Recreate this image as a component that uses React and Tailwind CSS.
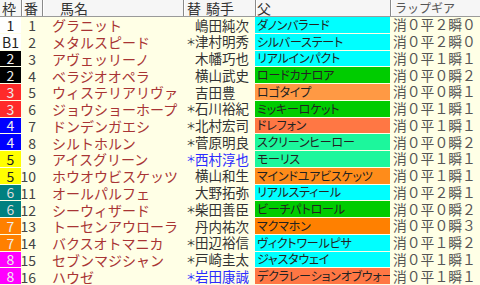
import React from 'react';

const waku = {
	1: { bg: 'bg-white', fg: 'text-[#222]' },
	2: { bg: 'bg-black', fg: 'text-[#eee]' },
	3: { bg: 'bg-[#ff2a2a]', fg: 'text-[#eee]' },
	4: { bg: 'bg-[#0000ff]', fg: 'text-[#eee]' },
	5: { bg: 'bg-[#ffff00]', fg: 'text-[#222]' },
	6: { bg: 'bg-[#008080]', fg: 'text-[#ddd]' },
	7: { bg: 'bg-[#ff8000]', fg: 'text-[#eee]' },
	8: { bg: 'bg-[#ff00ff]', fg: 'text-[#eee]' },
};

const sire = {
	cyan: 'bg-[#00ffff]',
	green: 'bg-[#00cc00]',
	orange: 'bg-[#ff9944]',
	coral: 'bg-[#ff7744]',
	mint: 'bg-[#1cf79c]',
	amber: 'bg-[#ff8c1a]',
	deep: 'bg-[#ff8000]',
};

const horses = [
	{ w: 1, label: '1', no: 1, name: 'グラニット', mark: false, jockey: '嶋田純次', father: 'ダノンバラード', c: 'cyan', gear: '消０平２瞬０' },
	{ w: 1, label: 'B1', no: 2, name: 'メタルスピード', mark: true, jockey: '津村明秀', father: 'シルバーステート', c: 'cyan', gear: '消０平２瞬０' },
	{ w: 2, label: '2', no: 3, name: 'アヴェッリーノ', mark: false, jockey: '木幡巧也', father: 'リアルインパクト', c: 'cyan', gear: '消０平１瞬１' },
	{ w: 2, label: '2', no: 4, name: 'ベラジオオペラ', mark: false, jockey: '横山武史', father: 'ロードカナロア', c: 'green', gear: '消０平０瞬２' },
	{ w: 3, label: '3', no: 5, name: 'ウィステリアリヴァ', mark: false, jockey: '吉田豊', father: 'ロゴタイプ', c: 'orange', gear: '消０平０瞬１' },
	{ w: 3, label: '3', no: 6, name: 'ジョウショーホープ', mark: true, jockey: '石川裕紀', father: 'ミッキーロケット', c: 'green', gear: '消０平１瞬１' },
	{ w: 4, label: '4', no: 7, name: 'ドンデンガエシ', mark: true, jockey: '北村宏司', father: 'ドレフォン', c: 'coral', gear: '消０平１瞬１' },
	{ w: 4, label: '4', no: 8, name: 'シルトホルン', mark: true, jockey: '菅原明良', father: 'スクリーンヒーロー', c: 'mint', gear: '消０平０瞬２' },
	{ w: 5, label: '5', no: 9, name: 'アイスグリーン', mark: true, blue: true, jockey: '西村淳也', father: 'モーリス', c: 'mint', gear: '消０平１瞬１' },
	{ w: 5, label: '5', no: 10, name: 'ホウオウビスケッツ', mark: false, jockey: '横山和生', father: 'マインドユアビスケッツ', c: 'amber', gear: '消０平１瞬１' },
	{ w: 6, label: '6', no: 11, name: 'オールパルフェ', mark: false, jockey: '大野拓弥', father: 'リアルスティール', c: 'cyan', gear: '消０平２瞬１' },
	{ w: 6, label: '6', no: 12, name: 'シーウィザード', mark: true, jockey: '柴田善臣', father: 'ビーチパトロール', c: 'green', gear: '消０平０瞬２' },
	{ w: 7, label: '7', no: 13, name: 'トーセンアウローラ', mark: false, jockey: '丹内祐次', father: 'マクマホン', c: 'deep', gear: '消０平０瞬３' },
	{ w: 7, label: '7', no: 14, name: 'バクスオトマニカ', mark: true, jockey: '田辺裕信', father: 'ヴィクトワールピサ', c: 'cyan', gear: '消０平１瞬２' },
	{ w: 8, label: '8', no: 15, name: 'セブンマジシャン', mark: true, jockey: '戸崎圭太', father: 'ジャスタウェイ', c: 'cyan', gear: '消０平１瞬１' },
	{ w: 8, label: '8', no: 16, name: 'ハウゼ', mark: true, blue: true, jockey: '岩田康誠', father: 'デクラレーションオブウォー', c: 'coral', gear: '消０平１瞬１' },
];

const HeadCell = ({ className, children }) => (
	<div className={`shrink-0 h-full flex items-center border-r border-[#8a8a8a] shadow-[1px_0_0_#fff] ${className}`}>
		{children}
	</div>
);

const App = () => {
	const renderRows = horses.map((h) => {
		const f = waku[h.w];
		return (
			<div key={h.no} className="flex-1 flex min-h-0 w-[480px]">
				<div className="shrink-0 w-[22px] pr-px pb-px flex">
					<div className={`flex-1 flex items-center justify-center text-[14px] ${f.bg} ${f.fg}`}>
						{h.label}
					</div>
				</div>
				<div className="shrink-0 w-[21px] flex items-center justify-end pr-[7px] text-[14px] text-[#444]">
					{h.no}
				</div>
				<div className="shrink-0 w-[141px] flex items-center pl-[9px] text-[14px] text-[#a83434] whitespace-nowrap overflow-hidden">
					{h.name}
				</div>
				<div className={`shrink-0 w-[71px] flex items-center pl-[3px] text-[13.5px] whitespace-nowrap overflow-hidden ${h.blue ? 'text-[#2b2bff]' : 'text-[#333]'}`}>
					<span className="w-[8px] flex justify-center text-[10px]">{h.mark ? '＊' : ''}</span>
					<span>{h.jockey}</span>
				</div>
				<div className="shrink-0 w-[136px] pr-px pb-px flex">
					<div className={`flex-1 min-w-0 flex items-center pl-[2px] text-[12px] tracking-[-0.2px] text-[#222] whitespace-nowrap overflow-hidden [font-feature-settings:'palt'] ${sire[h.c]}`}>
						{h.father}
					</div>
				</div>
				<div className="shrink-0 w-[89px] flex items-center pl-[2px] text-[13.8px] text-[#555] whitespace-nowrap overflow-hidden">
					{h.gear}
				</div>
			</div>
		);
	});

	return (
		<div className="w-[480px] h-[285px] overflow-hidden flex flex-col bg-[#ffffe6] font-['Noto_Sans_CJK_JP',sans-serif] leading-none">
			<div className="shrink-0 h-[17px] flex bg-[#f6f6f6] border-b border-[#9a9a9a] text-[14px] text-[#333]">
				<HeadCell className="w-[22px] pl-[2px]">枠</HeadCell>
				<HeadCell className="w-[21px] pl-[2px]">番</HeadCell>
				<HeadCell className="w-[141px] pl-[17px]">馬名</HeadCell>
				<HeadCell className="w-[72px] pl-[3px]">
					替<span className="ml-[5px]">騎手</span>
				</HeadCell>
				<HeadCell className="w-[135px] pl-[1px]">父</HeadCell>
				<div className="shrink-0 w-[89px] h-full flex items-center pl-[4px] text-[12px] text-[#555]">
					ラップギア
				</div>
			</div>
			{renderRows}
		</div>
	);
};

export default App;
